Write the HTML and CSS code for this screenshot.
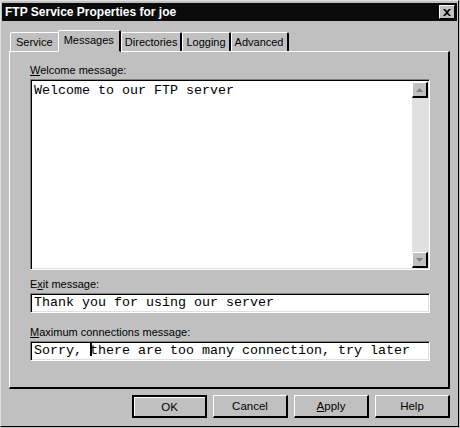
FILE: index.html
```html
<!DOCTYPE html>
<html lang="en">
<head>
  <meta charset="UTF-8" />
  <title>FTP Service Properties for joe</title>
  <link rel="stylesheet" href="styles.css">
</head>
<body>
  <div class="window">
    <div class="title-bar">
      <span class="title">FTP Service Properties for joe</span>
      <span class="close-btn">
        <svg width="8" height="7" viewBox="0 0 8 7"><path d="M0 0h2l2 2 2-2h2L5 3.5 8 7H6L4 5 2 7H0l3-3.5z" fill="#000"/></svg>
      </span>
    </div>

    <div class="tabs">
      <div class="tab">Service</div>
      <div class="tab active">Messages</div>
      <div class="tab">Directories</div>
      <div class="tab">Logging</div>
      <div class="tab">Advanced</div>
    </div>

    <div class="panel">
      <label class="field-label"><u>W</u>elcome message:</label>
      <div class="textarea">
        <div class="text">Welcome to our FTP server</div>
        <div class="scrollbar">
          <div class="arrow up"><svg width="7" height="4" viewBox="0 0 7 4"><path d="M3.5 0L7 4H0z" fill="#808080"/></svg></div>
          <div class="track"></div>
          <div class="arrow down"><svg width="7" height="4" viewBox="0 0 7 4"><path d="M0 0h7L3.5 4z" fill="#808080"/></svg></div>
        </div>
      </div>

      <label class="field-label">E<u>x</u>it message:</label>
      <div class="input">Thank you for using our server</div>

      <label class="field-label"><u>M</u>aximum connections message:</label>
      <div class="input">Sorry, <span class="caret"></span>there are too many connection, try later</div>
    </div>

    <div class="buttons">
      <div class="btn default">OK</div>
      <div class="btn">Cancel</div>
      <div class="btn"><u>A</u>pply</div>
      <div class="btn">Help</div>
    </div>
  </div>
</body>
</html>
```

FILE: styles.css
```css
* { margin: 0; padding: 0; box-sizing: border-box; }
body {
  font-family: 'Liberation Sans', Arial, sans-serif;
  font-size: 11px;
  background: #c0c0c0;
  color: #000;
}
.window {
  width: 459px;
  height: 427px;
  background: #c0c0c0;
  border-top: 1px solid #dfdfdf;
  border-left: 1px solid #dfdfdf;
  border-right: 1px solid #000;
  border-bottom: 1px solid #000;
  padding: 1px 1px 0 1px;
  display: flex;
  flex-direction: column;
}
.title-bar {
  height: 18px;
  margin-top: 1px;
  background: #0b0b0b;
  color: #fff;
  display: flex;
  align-items: center;
  justify-content: space-between;
  padding: 0 2px 0 3px;
}
.title {
  font-weight: bold;
  font-size: 12px;
}
.close-btn {
  width: 16px;
  height: 14px;
  background: #c0c0c0;
  border-top: 1px solid #fff;
  border-left: 1px solid #fff;
  border-right: 1px solid #000;
  border-bottom: 1px solid #000;
  display: flex;
  align-items: center;
  justify-content: center;
}
.tabs {
  display: flex;
  align-items: flex-end;
  margin-top: 8px;
  padding-left: 8px;
  height: 22px;
  position: relative;
  z-index: 1;
}
.tab {
  height: 19px;
  padding: 0 5px 0 5px;
  line-height: 18px;
  font-size: 11px;
  border-top: 1px solid #fff;
  border-left: 1px solid #fff;
  border-right: 2px solid #000;
  border-radius: 2px 2px 0 0;
}
.tab.active {
  height: 22px;
  margin: 0 -2px -1px -2px;
  padding: 0 5px;
  background: #c0c0c0;
  border-bottom: 1px solid #c0c0c0;
  position: relative;
  z-index: 2;
}
.tab.active + .tab { margin-left: 2px; }
.tab:nth-child(n+3) { padding: 0 3px; }
.panel {
  margin: 0 7px;
  height: 338px;
  border-top: 1px solid #fff;
  border-left: 1px solid #fff;
  border-right: 2px solid #000;
  border-bottom: 2px solid #000;
  padding: 12px 18px 0 20px;
  display: flex;
  flex-direction: column;
}
.field-label {
  font-size: 11px;
  height: 13px;
  line-height: 13px;
  margin-bottom: 2px;
}
.textarea, .input {
  background: #fff;
  border-top: 1px solid #808080;
  border-left: 1px solid #808080;
  border-right: 1px solid #fff;
  border-bottom: 1px solid #fff;
  box-shadow: inset 1px 1px 0 #000, inset -1px -1px 0 #dfdfdf;
  font-family: 'Liberation Mono', 'Courier New', monospace;
  font-size: 13.33px;
}
.textarea {
  height: 191px;
  display: flex;
  margin-bottom: 8px;
  padding: 2px 1px 1px 2px;
}
.text {
  flex: 1;
  padding: 1px 1px;
  line-height: 15px;
}
.scrollbar {
  width: 16px;
  display: flex;
  flex-direction: column;
}
.arrow {
  height: 16px;
  background: #c0c0c0;
  border-top: 1px solid #fff;
  border-left: 1px solid #fff;
  border-right: 2px solid #000;
  border-bottom: 2px solid #000;
  display: flex;
  align-items: center;
  justify-content: center;
}
.track {
  flex: 1;
  background: #e0e0e0;
}
.input {
  height: 20px;
  line-height: 18px;
  padding: 0 3px;
  margin-bottom: 13px;
  white-space: nowrap;
}
.caret {
  display: inline-block;
  width: 0;
  height: 14px;
  border-left: 2px solid #000;
  vertical-align: -2px;
  margin-right: -2px;
}
.buttons {
  display: flex;
  justify-content: flex-end;
  gap: 6px;
  padding-right: 7px;
  margin-top: 6px;
}
.btn {
  width: 75px;
  height: 23px;
  border-top: 1px solid #fff;
  border-left: 1px solid #fff;
  border-right: 2px solid #000;
  border-bottom: 2px solid #000;
  display: flex;
  align-items: center;
  justify-content: center;
  font-size: 11.5px;
}
.btn.default {
  border: 2px solid #000;
  box-shadow: inset 1px 1px 0 #fff;
}
```
